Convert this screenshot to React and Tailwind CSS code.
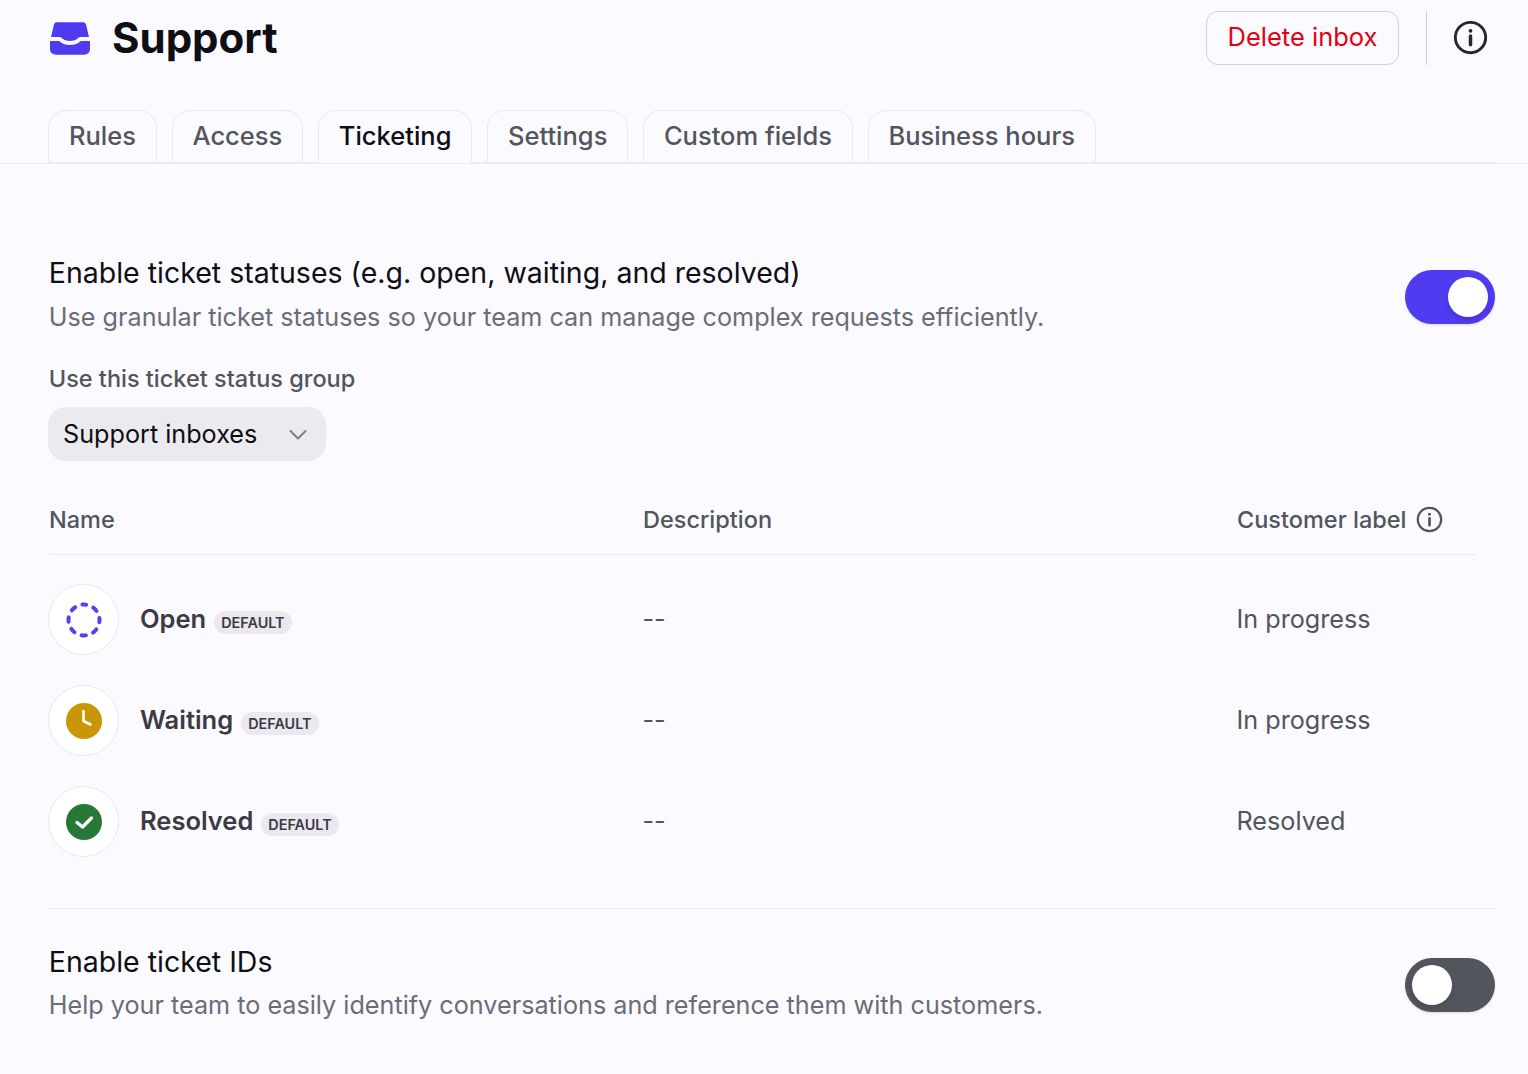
import React from "react";

const Info = ({ size, color, sw = 2 }) => (
  <svg width={size} height={size} viewBox="0 0 24 24" fill="none" stroke={color} strokeWidth={sw} strokeLinecap="round">
    <circle cx="12" cy="12" r="10.4" />
    <path d="M12 11v6" strokeWidth={sw + 0.4} />
    <circle cx="12" cy="7.4" r="1.3" fill={color} stroke="none" />
  </svg>
);

const Inbox = () => (
  <svg width="40" height="33.300" viewBox="0 0 120 100" fill="#4f3bf0" className="mt-[2px]">
    <path d="M22 1H98C103 1 106 3 108 7L117 45H92C86 45 84 49 80 52C75 56 68 57 60 57C52 57 45 56 40 52C36 49 34 45 28 45H3L12 7C14 3 17 1 22 1Z" />
    <path d="M0 60C0 58 2 57 4 57H26C30 57 32 60 35 63C41 67 50 69 60 69C70 69 79 67 85 63C88 60 90 57 94 57H116C118 57 120 58 120 60V82C120 92 112 98 102 98H18C8 98 0 92 0 82Z" />
  </svg>
);

const tabs = ["Rules", "Access", "Ticketing", "Settings", "Custom fields", "Business hours"];

const Toggle = ({ on }) => (
  <div className={`flex h-[54px] w-[90px] shrink-0 items-center rounded-full px-[7px] shadow-sm ${on ? "justify-end bg-[#4f3bf0]" : "justify-start bg-[#52555e]"}`}>
    <div className="h-10 w-10 rounded-full bg-white shadow-md" />
  </div>
);

const Status = ({ icon, name, label }) => (
  <div className="grid h-[101px] grid-cols-[594px_594px_1fr] items-center">
    <div className="flex items-center">
      <div className="flex h-[71px] w-[71px] items-center justify-center rounded-full border border-[#e9e8ee] bg-white">{icon}</div>
      <span className="ml-[21px] text-[25.500px] font-semibold text-[#3c3b45]">{name}</span>
      <span className="ml-[8px] mt-[6px] rounded-full bg-[#ebe9ef] px-[7px] text-[14.400px] font-semibold leading-[23px] text-[#3c3b45]">DEFAULT</span>
    </div>
    <div className="ml-[0.5px] text-[25.200px] text-[#52555e]">--</div>
    <div className="ml-[0.5px] text-[25.200px] text-[#52555e]">{label}</div>
  </div>
);

export default function App() {
  return (
    <div className="h-[1074px] w-[1528px] overflow-hidden bg-[#fbfaff] font-['Inter',sans-serif] antialiased [font-optical-sizing:none] [font-variation-settings:'opsz'_14]">
      <header className="flex h-[110px] items-start justify-between pl-[50px] pr-[40px] pt-[11px]">
        <div className="flex h-[54px] items-center">
          <Inbox />
          <h1 className="ml-[22px] text-[42px] font-bold leading-none text-[#0f0e14]">Support</h1>
        </div>
        <div className="flex items-center">
          <button className="h-[54px] w-[193px] rounded-[12px] border border-[#d0cfd6] pb-[1px] text-[25.500px] text-[#e3000f]">Delete inbox</button>
          <div className="ml-[27px] mr-[26px] h-[54px] w-px bg-[#d0cfd6]" />
          <div className="-mt-[2px]"><Info size={35} color="#27262e" sw={2} /></div>
        </div>
      </header>

      <nav className="border-b border-[#eeedf2]">
        <div className="ml-[48px] mr-[33px] flex h-[53px] gap-[14.500px] border-b border-[#e9e8ee]">
          {tabs.map((t) => (
            <div
              key={t}
              className={`flex h-[53px] items-center rounded-t-[18px] border border-[#e9e8ee] px-[20px] text-[25.500px] font-medium ${t === "Ticketing" ? "border-b-[#fbfaff] text-[#0f0e14]" : "text-[#52555e]"}`}
            >
              {t}
            </div>
          ))}
        </div>
      </nav>

      <main className="pl-[48px] pr-[33px]">
        <section className="mt-[87px] flex items-start justify-between">
          <div className="pl-[0.75px]">
            <h2 className="text-[28.500px] leading-[44px] text-[#0f0e14]">Enable ticket statuses (e.g. open, waiting, and resolved)</h2>
            <p className="text-[25.200px] leading-[44px] text-[#6b6d76]">Use granular ticket statuses so your team can manage complex requests efficiently.</p>
          </div>
          <div className="mt-[19px]"><Toggle on /></div>
        </section>

        <label className="mt-[22px] block pl-[0.75px] text-[23.500px] font-[550] leading-[36px] text-[#52555e]">Use this ticket status group</label>
        <div className="mt-[10px] flex h-[54px] w-[278px] items-center justify-between rounded-[18px] bg-[#ebeaef] pl-[15px] pr-[18px] pt-[1px] text-[25.200px] text-[#0f0e14]">
          <span>Support inboxes</span>
          <svg width="20" height="20" viewBox="0 0 20 20" fill="none" stroke="#7b7c85" strokeWidth="2" strokeLinecap="round" strokeLinejoin="round"><path d="M2.500 6l7.500 7.500L17.500 6"/></svg>
        </div>

        <div className="ml-px mr-[20px] mt-[25px] grid h-[69px] grid-cols-[594px_594px_1fr] items-center border-b border-[#e9e8ee] pb-px text-[23.500px] font-[550] text-[#52555e]">
          <div>Name</div>
          <div>Description</div>
          <div className="flex items-center gap-[9px]">Customer label <div className="-mt-px"><Info size={27} color="#52555e" sw={2} /></div></div>
        </div>

        <div className="mt-[14px]">
          <Status
            name="Open"
            label="In progress"
            icon={<svg width="36" height="36" viewBox="0 0 36 36" fill="none"><circle cx="18" cy="18" r="15.500" stroke="#5540f5" strokeWidth="4" strokeLinecap="round" strokeDasharray="4.500 7.670" strokeDashoffset="2.250" transform="rotate(-90 18 18)"/></svg>}
          />
          <Status
            name="Waiting"
            label="In progress"
            icon={<svg width="36" height="36" viewBox="0 0 36 36" fill="none"><circle cx="18" cy="18" r="18" fill="#c99606"/><path d="M17.500 8v10l7 3.500" stroke="#fff" strokeWidth="2.600" strokeLinecap="round" strokeLinejoin="round"/></svg>}
          />
          <Status
            name="Resolved"
            label="Resolved"
            icon={<svg width="36" height="36" viewBox="0 0 36 36" fill="none"><circle cx="18" cy="18" r="18" fill="#267836"/><path d="M11 18.500l5.500 4.500 9-9" stroke="#fff" strokeWidth="3.400" strokeLinecap="round" strokeLinejoin="round"/></svg>}
          />
        </div>

        <div className="mt-[36px] border-t border-[#e9e8ee]" />

        <section className="mt-[31px] flex items-start justify-between">
          <div className="pl-[0.75px]">
            <h2 className="text-[28.500px] leading-[44px] text-[#0f0e14]">Enable ticket IDs</h2>
            <p className="-mt-px text-[25.200px] leading-[44px] text-[#6b6d76]">Help your team to easily identify conversations and reference them with customers.</p>
          </div>
          <div className="mt-[18px]"><Toggle /></div>
        </section>
      </main>
    </div>
  );
}
